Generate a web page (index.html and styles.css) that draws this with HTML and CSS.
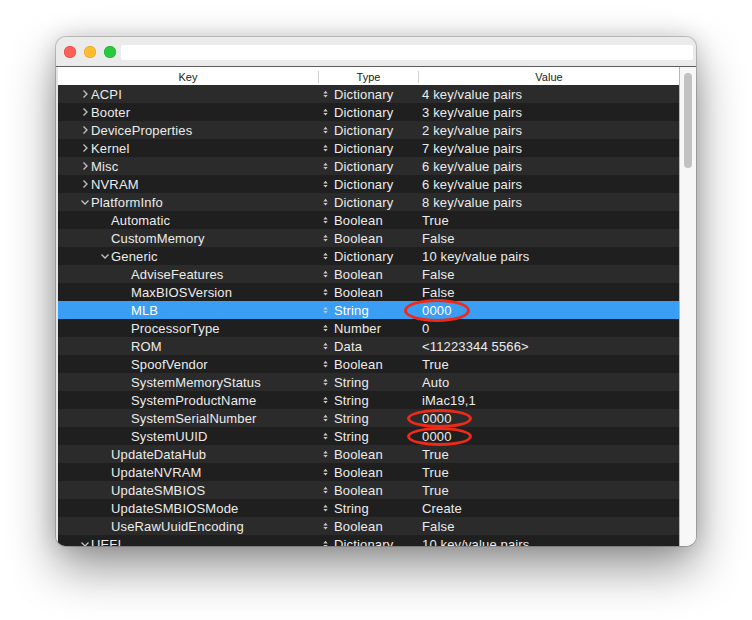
FILE: index.html
```html
<!DOCTYPE html>
<html lang="en">
<head>
<meta charset="utf-8">
<title>Property List</title>
<link rel="stylesheet" href="styles.css">
</head>
<body>
<div class="desktop">
<div class="window">
  <div class="titlebar">
    <span class="light red"></span>
    <span class="light yellow"></span>
    <span class="light green"></span>
    <div class="field"></div>
  </div>
  <div class="content">
    <div class="table">
      <div class="header">
        <div class="hcell hkey">Key</div>
        <div class="hsep"></div>
        <div class="hcell htype">Type</div>
        <div class="hsep"></div>
        <div class="hcell hval">Value</div>
      </div>
      <div class="rows" id="rows"></div>
    </div>
    <div class="scroll"><div class="thumb"></div></div>
  </div>
</div>
</div>

<template id="chev-right"><svg class="chev" width="12" height="18" viewBox="0 0 12 18"><polyline points="4.5,5.5 8,9 4.5,12.5" fill="none" stroke="#c4c4c4" stroke-width="1.3"/></svg></template>
<template id="chev-down"><svg class="chev" width="12" height="18" viewBox="0 0 12 18"><polyline points="2.5,7.5 6,11 9.5,7.5" fill="none" stroke="#c4c4c4" stroke-width="1.3"/></svg></template>
<template id="updown"><svg class="ud" width="5" height="18" viewBox="0 0 5 18"><polygon points="0.3,8.4 2.5,5.8 4.7,8.4" fill="#c8c8c8"/><polygon points="0.3,10 2.5,12.6 4.7,10" fill="#c8c8c8"/></svg></template>

<script src="app.js"></script>
</body>
</html>
```

FILE: app.js
```js
const data = [
  ["ACPI","Dictionary","4 key/value pairs",0,"c"],
  ["Booter","Dictionary","3 key/value pairs",0,"c"],
  ["DeviceProperties","Dictionary","2 key/value pairs",0,"c"],
  ["Kernel","Dictionary","7 key/value pairs",0,"c"],
  ["Misc","Dictionary","6 key/value pairs",0,"c"],
  ["NVRAM","Dictionary","6 key/value pairs",0,"c"],
  ["PlatformInfo","Dictionary","8 key/value pairs",0,"e"],
  ["Automatic","Boolean","True",1,""],
  ["CustomMemory","Boolean","False",1,""],
  ["Generic","Dictionary","10 key/value pairs",1,"e"],
  ["AdviseFeatures","Boolean","False",2,""],
  ["MaxBIOSVersion","Boolean","False",2,""],
  ["MLB","String","0000",2,"","sel","m1"],
  ["ProcessorType","Number","0",2,""],
  ["ROM","Data","<11223344 5566>",2,""],
  ["SpoofVendor","Boolean","True",2,""],
  ["SystemMemoryStatus","String","Auto",2,""],
  ["SystemProductName","String","iMac19,1",2,""],
  ["SystemSerialNumber","String","0000",2,"","","m2"],
  ["SystemUUID","String","0000",2,"","","m3"],
  ["UpdateDataHub","Boolean","True",1,""],
  ["UpdateNVRAM","Boolean","True",1,""],
  ["UpdateSMBIOS","Boolean","True",1,""],
  ["UpdateSMBIOSMode","String","Create",1,""],
  ["UseRawUuidEncoding","Boolean","False",1,""],
  ["UEFI","Dictionary","10 key/value pairs",0,"e"]
];
const rows = document.getElementById("rows");
const tpl = id => document.getElementById(id).content.firstElementChild.cloneNode(true);
data.forEach((d, i) => {
  const [key, type, val, lvl, exp, sel, mark] = d;
  const row = document.createElement("div");
  row.className = "row " + (i % 2 === 0 ? "odd" : "even") + (sel ? " selected" : "");
  const k = document.createElement("div");
  k.className = "cell key l" + lvl;
  if (exp === "c") k.appendChild(tpl("chev-right"));
  else if (exp === "e") k.appendChild(tpl("chev-down"));
  else { const s = document.createElement("span"); s.className = "chev"; k.appendChild(s); }
  const kt = document.createElement("span"); kt.className = "txt"; kt.textContent = key; k.appendChild(kt);
  const t = document.createElement("div");
  t.className = "cell type";
  t.appendChild(tpl("updown"));
  const tt = document.createElement("span"); tt.className = "txt"; tt.textContent = type; t.appendChild(tt);
  const v = document.createElement("div");
  v.className = "cell val";
  const vt = document.createElement("span"); vt.className = "txt"; vt.textContent = val; v.appendChild(vt);
  if (mark) { const m = document.createElement("span"); m.className = "mark " + mark; v.appendChild(m); }
  row.append(k, t, v);
  rows.appendChild(row);
});
```

FILE: styles.css
```css
html, body {
  margin: 0;
  padding: 0;
  background: #ffffff;
}
body {
  font-family: "Liberation Sans", Arial, sans-serif;
}
.desktop {
  width: 752px;
  height: 620px;
  box-sizing: border-box;
  padding: 37px 0 0 56px;
  background: #ffffff;
  overflow: hidden;
}
.window {
  width: 640px;
  height: 509px;
  border-radius: 10px;
  overflow: hidden;
  display: flex;
  flex-direction: column;
  background: #e6e6e6;
  box-shadow: 0 0 0 1px rgba(0,0,0,0.18), 0 22px 48px rgba(0,0,0,0.42), 0 0 22px rgba(0,0,0,0.16);
}
.titlebar {
  height: 29px;
  flex: none;
  display: flex;
  align-items: center;
  padding: 0 3px 0 8px;
  background: #ebebeb;
  border-bottom: 1px solid #5c5c5c;
  gap: 8px;
}
.light {
  width: 12px;
  height: 12px;
  border-radius: 50%;
  flex: none;
}
.red { background: #fe5f57; box-shadow: inset 0 0 0 0.5px #e0443e; }
.yellow { background: #febc2e; box-shadow: inset 0 0 0 0.5px #dea123; }
.green { background: #28c840; box-shadow: inset 0 0 0 0.5px #1aab29; }
.field {
  flex: 1;
  height: 15px;
  margin-left: -3px;
  margin-top: 1px;
  background: #ffffff;
  border-radius: 2px;
}
.content {
  flex: 1;
  display: flex;
  min-height: 0;
  padding-left: 2px;
  background: #e4e4e4;
}
.table {
  width: 621px;
  flex: none;
  display: flex;
  flex-direction: column;
  background: #1f1f1f;
  overflow: hidden;
}
.header {
  height: 18px;
  flex: none;
  display: flex;
  align-items: center;
  background: #ffffff;
  font-size: 11px;
  color: #222222;
}
.hcell { text-align: center; line-height: 18px; padding-top: 2px; }
.hkey { width: 260px; }
.htype { width: 99px; }
.hval { flex: 1; }
.hsep { width: 1px; height: 12px; margin-top: 1px; background: #d0d0d0; }
.row {
  display: flex;
  height: 18px;
  font-size: 13px;
  letter-spacing: 0.15px;
  color: #ececec;
}
.row.odd { background: #2b2b2b; }
.row.even { background: #1f1f1f; }
.row.selected { background: #3a9ef4; color: #ffffff; }
.cell {
  display: flex;
  align-items: center;
  white-space: nowrap;
}
.txt { line-height: 18px; padding-top: 2px; }
.key { width: 260px; padding-left: 21px; box-sizing: border-box; }
.key.l1 { padding-left: 41px; }
.key.l2 { padding-left: 61px; }
.chev { width: 12px; height: 18px; flex: none; display: block; }
.type { width: 100px; padding-left: 5px; box-sizing: border-box; gap: 6px; }
.ud { flex: none; display: block; }
.val { flex: 1; padding-left: 4px; position: relative; }
.mark {
  position: absolute;
  border: 3.5px solid #ef2a18;
  border-radius: 50%;
  box-sizing: border-box;
}
.m1 { left: -14px; top: -2px; width: 66px; height: 23px; }
.m2 { left: -11px; top: 0px; width: 65px; height: 19px; }
.m3 { left: -11px; top: 0px; width: 65px; height: 19px; }
.scroll {
  flex: 1;
  background: #f7f7f7;
  border-left: 1px solid #b8b8b8;
  padding: 6px 0 0 4px;
}
.thumb {
  width: 8px;
  height: 95px;
  border-radius: 4px;
  background: #c2c2c2;
}
```
